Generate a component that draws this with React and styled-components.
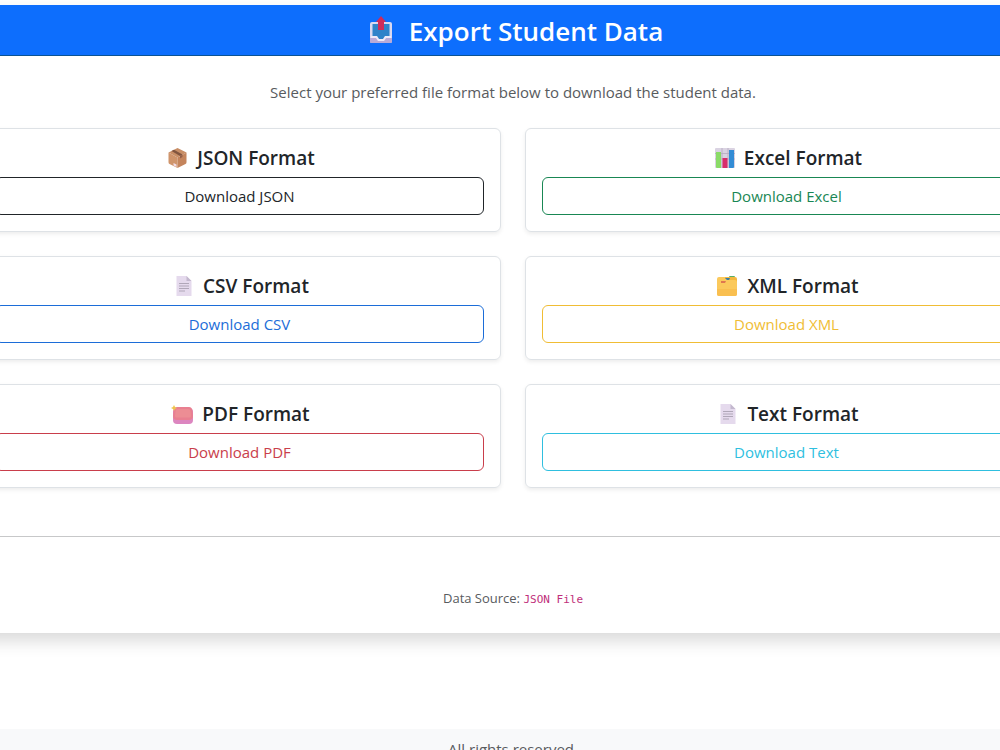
import React from "react";
import styled, { createGlobalStyle } from "styled-components";

const GlobalStyle = createGlobalStyle`
  *, *::before, *::after { box-sizing: border-box; }
  body {
    margin: 0;
    overflow-x: hidden;
    background: #fff;
    color: #212529;
    font-family: "Open Sans", "Noto Sans", sans-serif;
    font-size: 15px;
    line-height: 24px;
  }
`;

const Page = styled.div`
  width: calc(100% + 150px);
  margin: 0 -88px 0 -62px;
  padding-top: 5px;
`;

const Panel = styled.main`
  background: #fff;
  box-shadow: 0 8px 16px rgba(0, 0, 0, 0.15);
`;

const Banner = styled.header`
  display: flex;
  align-items: center;
  justify-content: center;
  height: 51px;
  padding-top: 2px;
  background: #0d6efd;
  border-bottom: 1px solid #0b5394;
  color: #fff;
`;

const BannerTitle = styled.h1`
  display: flex;
  align-items: center;
  gap: 8px;
  margin: 0;
  font-size: 26px;
  font-weight: 600;
  line-height: 34px;
`;

const Content = styled.div`
  padding: 24px 40px;
`;

const Intro = styled.p`
  margin: 0 0 24px;
  text-align: center;
  color: #585b5e;
`;

const Grid = styled.div`
  display: grid;
  grid-template-columns: 1fr 1fr;
  gap: 24px;
`;

const Card = styled.section`
  padding: 16px;
  border: 1px solid #dee2e6;
  border-radius: 6px;
  box-shadow: 0 2px 4px rgba(0, 0, 0, 0.075);
`;

const CardTitle = styled.h2`
  display: flex;
  align-items: center;
  justify-content: center;
  gap: 5px;
  margin: 0 0 6px;
  font-size: 19px;
  font-weight: 600;
  line-height: 26px;
`;

const DownloadButton = styled.button`
  display: block;
  width: 100%;
  height: 38px;
  padding: 0 12px;
  border: 1px solid ${(p) => p.$color};
  border-radius: 6px;
  background: transparent;
  color: ${(p) => p.$color};
  font: inherit;
  cursor: pointer;

  &:hover {
    background: ${(p) => p.$color};
    color: #fff;
  }
`;

const Divider = styled.hr`
  margin: 48px 0 50px;
  border: 0;
  border-top: 1px solid #c7c8c9;
`;

const Source = styled.p`
  margin: 0;
  text-align: center;
  font-size: 13px;
  line-height: 22px;
  color: #585b5e;
`;

const Code = styled.code`
  font-family: "DejaVu Sans Mono", monospace;
  font-size: 11px;
  line-height: 1;
  color: #c02f7b;
`;

const Footer = styled.footer`
  margin-top: 96px;
  padding: 8px 16px 24px;
  background: #f8f9fa;
  text-align: center;
  color: #585b5e;
`;

function OutboxIcon() {
  return (
    <svg width="38" height="32" viewBox="0 0 38 32" aria-hidden="true">
      <rect x="7" y="7" width="22" height="21" rx="2" fill="#d9d8f0" />
      <path d="M7 23h7l2 2h4l2-2h7v4a1 1 0 0 1-1 1H8a1 1 0 0 1-1-1z" fill="#b9abd8" />
      <path d="M9.500 9h17v13h-4l-2 3h-5l-2-3h-4z" fill="#2f83c9" />
      <path d="M8 22h5.500l2 3h5l2-3H28" fill="none" stroke="#eeeaf8" strokeWidth="2" />
      <path d="M18 1l5 6h-2v8h-6V7h-2z" fill="#d02b58" />
    </svg>
  );
}

function PackageIcon() {
  return (
    <svg width="28" height="24" viewBox="0 0 28 24" aria-hidden="true">
      <path d="M4.500 6.500 13.500 2l9 4.500-9 5z" fill="#c88e66" />
      <path d="M4.500 6.500l9 5V22l-8-4a2 2 0 0 1-1-2z" fill="#cf946b" />
      <path d="M22.500 6.500l-9 5V22l8-4a2 2 0 0 0 1-2z" fill="#c4845c" />
      <path d="M7.500 5l2.500-1.200 8.500 4.700-2.500 1.500z" fill="#81553f" />
      <path d="M16 10l2.500-1.500v2.500L16 12.500z" fill="#94604a" />
      <path d="M9.500 17l3 1.500V21l-3-1.500z" fill="#f1dce6" />
    </svg>
  );
}

function ChartIcon() {
  return (
    <svg width="28" height="24" viewBox="0 0 28 24" aria-hidden="true">
      <rect x="4" y="2" width="20" height="20" rx="1" fill="#dad3e2" />
      <path d="M4 7.500h20M4 13h20M11 2v20M17 2v20" stroke="#b5abc0" strokeWidth="0.8" />
      <path d="M5 6h5v16H6a1 1 0 0 1-1-1z" fill="#8adb67" />
      <rect x="11.500" y="12" width="5" height="10" fill="#d72c6b" />
      <path d="M18 4h5v17a1 1 0 0 1-1 1h-4z" fill="#338cd5" />
    </svg>
  );
}

function DocumentIcon() {
  return (
    <svg width="28" height="24" viewBox="0 0 28 24" aria-hidden="true">
      <path d="M6.500 2h10l5 5v15h-15z" fill="#e5daed" />
      <path d="M16.500 2l5 5h-5z" fill="#c3b8ce" />
      <path d="M9 9.500h10M9 12h10M9 14.500h10M9 17h6" stroke="#b0a7b8" />
    </svg>
  );
}

function FolderIcon() {
  return (
    <svg width="28" height="24" viewBox="0 0 28 24" aria-hidden="true">
      <path d="M15 3q0-1 1-1h4q1 0 1 1v2h-6z" fill="#5bae64" />
      <path d="M10 4q0-1 1-1h10q2 0 2 2v3H10z" fill="#f4b73e" />
      <path d="M11 4h5l-1 2h-4z" fill="#397da4" />
      <path d="M3 5q0-2 2-2h5l3 3h8q2 0 2 2v12q0 2-2 2H5q-2 0-2-2z" fill="#fbc95c" />
      <path d="M3 15h20v5q0 2-2 2H5q-2 0-2-2z" fill="#f9bf50" />
      <path d="M7 7h5l-1 2H7z" fill="#df7650" />
    </svg>
  );
}

function SoapIcon() {
  return (
    <svg width="28" height="24" viewBox="0 0 28 24" aria-hidden="true">
      <rect x="4" y="6" width="20" height="16" rx="4" fill="#dc86c0" />
      <path d="M8 5h12q3 0 3.500 4l.5 5q0 4-4 4H8q-4 0-4-4l.5-5Q5 5 8 5z" fill="#e97f90" />
      <path d="M8.500 7h11q1.500 0 2 2l.5 5q0 1.500-2 1.500H8q-2 0-2-1.500l.5-5q.5-2 2-2z" fill="#ec8d94" />
      <path d="M5 3l1 2 2 1-2 1-1 2-1-2-2-1 2-1z" fill="#efc44e" />
    </svg>
  );
}

const formats = [
  { name: "JSON", color: "#212529", Icon: PackageIcon },
  { name: "Excel", color: "#198754", Icon: ChartIcon },
  { name: "CSV", color: "#1c6dd8", Icon: DocumentIcon },
  { name: "XML", color: "#f0bd35", Icon: FolderIcon },
  { name: "PDF", color: "#c93e4b", Icon: SoapIcon },
  { name: "Text", color: "#2fbfdf", Icon: DocumentIcon },
];

export default function App() {
  return (
    <>
      <GlobalStyle />
      <Page>
        <Panel>
          <Banner>
            <BannerTitle>
              <OutboxIcon />
              Export Student Data
            </BannerTitle>
          </Banner>
          <Content>
            <Intro>
              Select your preferred file format below to download the student data.
            </Intro>
            <Grid>
              {formats.map(({ name, color, Icon }) => (
                <Card key={name}>
                  <CardTitle>
                    <Icon />
                    {name} Format
                  </CardTitle>
                  <DownloadButton type="button" $color={color}>
                    Download {name}
                  </DownloadButton>
                </Card>
              ))}
            </Grid>
            <Divider />
            <Source>
              Data Source: <Code>JSON File</Code>
            </Source>
          </Content>
        </Panel>
        <Footer>All rights reserved.</Footer>
      </Page>
    </>
  );
}
